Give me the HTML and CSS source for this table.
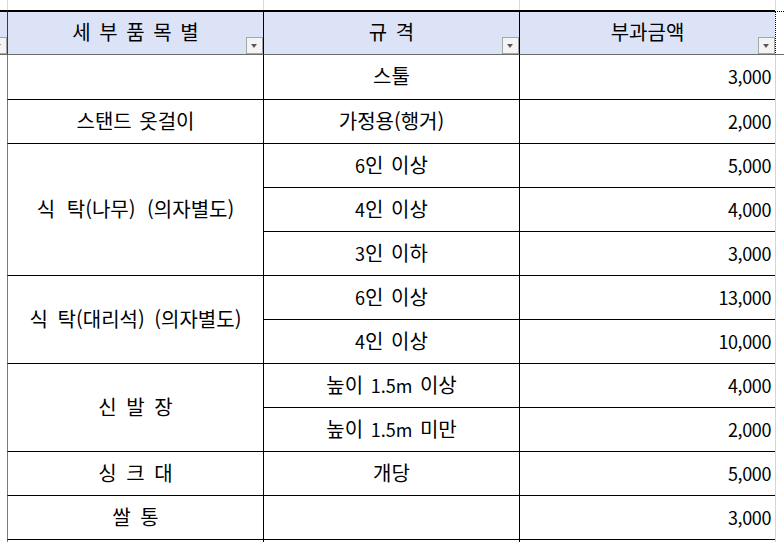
FILE: index.html
```html
<!DOCTYPE html>
<html lang="ko">
<head>
<meta charset="utf-8">
<title>세부품목별 부과금액</title>
<link rel="stylesheet" href="styles.css">
</head>
<body>
<div class="sheet">
  <div class="strip g0"></div>
  <div class="strip g1"></div>
  <div class="strip g2"></div>
  <div class="strip g3"></div>
  <div class="strip g4"></div>

  <div class="hd g0"><span class="btn"></span></div>
  <div class="hd g1"><span class="wide">세 부 품 목 별</span><span class="btn"></span></div>
  <div class="hd g2"><span class="wide">규 격</span><span class="btn"></span></div>
  <div class="hd g3"><span>부과금액</span><span class="btn"></span></div>
  <div class="hd g4"></div>

  <div class="gutter-l"></div>
  <div class="gutter-r"></div>

  <div class="cell g1 first"></div>
  <div class="cell g2 first">스툴</div>
  <div class="cell g3 first num">3,000</div>

  <div class="cell g1">스탠드 옷걸이</div>
  <div class="cell g2">가정용(행거)</div>
  <div class="cell g3 num">2,000</div>

  <div class="cell g1 span3 wide2">식 탁(나무) (의자별도)</div>
  <div class="cell g2"><span class="n">6</span>인 이상</div>
  <div class="cell g3 num">5,000</div>
  <div class="cell g2"><span class="n">4</span>인 이상</div>
  <div class="cell g3 num">4,000</div>
  <div class="cell g2"><span class="n">3</span>인 이하</div>
  <div class="cell g3 num">3,000</div>

  <div class="cell g1 span2 wide3">식 탁(대리석) (의자별도)</div>
  <div class="cell g2"><span class="n">6</span>인 이상</div>
  <div class="cell g3 num">13,000</div>
  <div class="cell g2"><span class="n">4</span>인 이상</div>
  <div class="cell g3 num">10,000</div>

  <div class="cell g1 span2 spaced">신 발 장</div>
  <div class="cell g2">높이 <span class="n">1.5m</span> 이상</div>
  <div class="cell g3 num">4,000</div>
  <div class="cell g2">높이 <span class="n">1.5m</span> 미만</div>
  <div class="cell g3 num">2,000</div>

  <div class="cell g1 spaced">싱 크 대</div>
  <div class="cell g2">개당</div>
  <div class="cell g3 num">5,000</div>

  <div class="cell g1 spaced">쌀 통</div>
  <div class="cell g2"></div>
  <div class="cell g3 num">3,000</div>

  <div class="cell g1"></div>
  <div class="cell g2"></div>
  <div class="cell g3"></div>
</div>
</body>
</html>
```

FILE: styles.css
```css
* { box-sizing: border-box; }

html, body {
  margin: 0;
  padding: 0;
  background: #ffffff;
}

body {
  font-family: "Noto Sans CJK KR", "Noto Sans", sans-serif;
  font-size: 20px;
  color: #000000;
  overflow: hidden;
}

.sheet {
  display: grid;
  grid-template-columns: 7px 256px 256px 256px 9px;
  grid-template-rows: 10px 45px 44px repeat(10, 44px) 10px;
  width: 784px;
  height: 542px;
}

.g0 { grid-column: 1; }
.g1 { grid-column: 2; }
.g2 { grid-column: 3; }
.g3 { grid-column: 4; }
.g4 { grid-column: 5; }

/* top strip with faint gridlines */
.strip {
  background: #ffffff;
}
.strip.g1, .strip.g2, .strip.g3, .strip.g4 {
  border-left: 1px solid #d9d9d9;
}

/* header row */
.hd {
  position: relative;
  background: #dde3f6;
  border-top: 2px solid #000000;
  border-bottom: 1px solid #6d6d6d;
  display: flex;
  align-items: center;
  justify-content: center;
  overflow: hidden;
  line-height: 1;
}
.hd.g1 { border-left: 1px solid #3a3a3a; }
.hd.g2, .hd.g3 { border-left: 1px solid #000000; }
.hd.g4 {
  background: #ffffff;
  border-top: 1px dotted #000000;
  border-left: 1px dotted #000000;
  margin-top: 1px;
}
.hd span {
  padding-bottom: 2px;
}
.hd span.wide {
  word-spacing: 3px;
}

.btn {
  position: absolute;
  right: 0;
  bottom: 0;
  width: 17px;
  height: 17px;
  border: 1px solid #a6a6a6;
  background: #f4f4f4;
  padding: 0 !important;
}
.btn::after {
  content: "";
  position: absolute;
  left: 4px;
  top: 6px;
  border-left: 3.5px solid transparent;
  border-right: 3.5px solid transparent;
  border-top: 4px solid #5a5a5a;
}

/* side gutters */
.gutter-l {
  grid-column: 1;
  grid-row: 3 / 15;
  background: #ffffff;
}
.gutter-r {
  grid-column: 5;
  grid-row: 3 / 15;
  background: #ffffff;
  border-left: 1px solid #d4d4d4;
}

/* body cells */
.cell {
  display: flex;
  align-items: center;
  justify-content: center;
  border-top: 1px solid #000000;
  background: #ffffff;
  line-height: 1;
  padding-bottom: 2px;
  white-space: pre;
  word-spacing: 2px;
}
.cell.first { border-top: none; }
.cell.g1 { border-left: 1px solid #7a7a7a; }
.cell.g2, .cell.g3 { border-left: 1px solid #000000; }
.cell.num {
  justify-content: flex-end;
  padding-right: 4px;
  font-size: 18px;
  letter-spacing: -0.4px;
}
.cell.span3 { grid-row: span 3; }
.cell.span2 { grid-row: span 2; }
.cell.spaced { word-spacing: 4px; }
.cell.wide2 { word-spacing: 6px; }
.cell.wide3 { word-spacing: 4px; }

.n {
  font-size: 18px;
}
```
